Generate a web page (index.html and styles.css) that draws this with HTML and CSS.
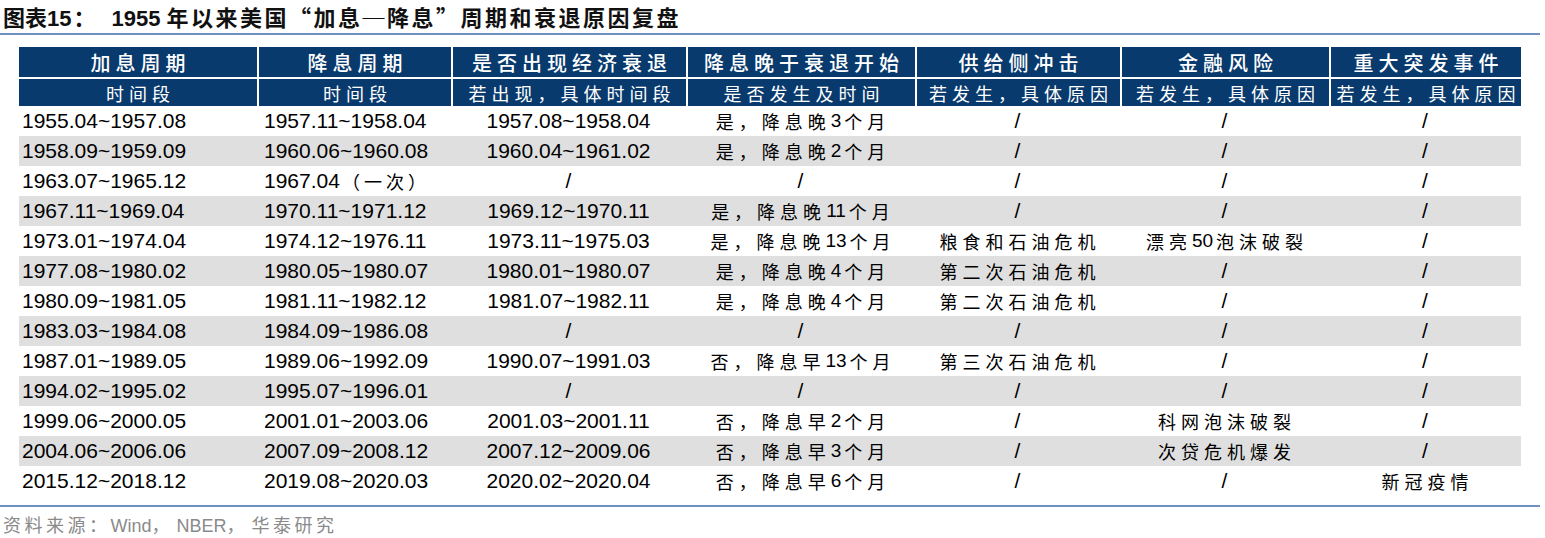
FILE: index.html
```html
<!DOCTYPE html>
<html lang="zh-CN">
<head>
<meta charset="utf-8">
<title>图表15</title>
<link rel="stylesheet" href="styles.css">
</head>
<body>
<div class="page">
  <h1 class="title"><span class="cj tight">图表</span>15<span class="cj colon">：</span>1955 <span class="cj">年以来美国“加息─降息”周期和衰退原因复盘</span></h1>
  <div class="rule"></div>
  <div class="table">
    <div class="row head1">
      <div class="th">加息周期</div>
      <div class="th">降息周期</div>
      <div class="th">是否出现经济衰退</div>
      <div class="th">降息晚于衰退开始</div>
      <div class="th">供给侧冲击</div>
      <div class="th">金融风险</div>
      <div class="th">重大突发事件</div>
    </div>
    <div class="row head2">
      <div class="th">时间段</div>
      <div class="th">时间段</div>
      <div class="th">若出现，具体时间段</div>
      <div class="th">是否发生及时间</div>
      <div class="th">若发生，具体原因</div>
      <div class="th">若发生，具体原因</div>
      <div class="th">若发生，具体原因</div>
    </div>

    <div class="row body">
      <div class="td left">1955.04~1957.08</div>
      <div class="td left2">1957.11~1958.04</div>
      <div class="td">1957.08~1958.04</div>
      <div class="td zh">是，降息晚<span class="n">3</span>个月</div>
      <div class="td">/</div>
      <div class="td">/</div>
      <div class="td">/</div>
    </div>
    <div class="row body alt">
      <div class="td left">1958.09~1959.09</div>
      <div class="td left2">1960.06~1960.08</div>
      <div class="td">1960.04~1961.02</div>
      <div class="td zh">是，降息晚<span class="n">2</span>个月</div>
      <div class="td">/</div>
      <div class="td">/</div>
      <div class="td">/</div>
    </div>
    <div class="row body">
      <div class="td left">1963.07~1965.12</div>
      <div class="td left2">1967.04<span class="zhs">（一次）</span></div>
      <div class="td">/</div>
      <div class="td">/</div>
      <div class="td">/</div>
      <div class="td">/</div>
      <div class="td">/</div>
    </div>
    <div class="row body alt">
      <div class="td left">1967.11~1969.04</div>
      <div class="td left2">1970.11~1971.12</div>
      <div class="td">1969.12~1970.11</div>
      <div class="td zh">是，降息晚<span class="n">11</span>个月</div>
      <div class="td">/</div>
      <div class="td">/</div>
      <div class="td">/</div>
    </div>
    <div class="row body">
      <div class="td left">1973.01~1974.04</div>
      <div class="td left2">1974.12~1976.11</div>
      <div class="td">1973.11~1975.03</div>
      <div class="td zh">是，降息晚<span class="n">13</span>个月</div>
      <div class="td zh">粮食和石油危机</div>
      <div class="td zh">漂亮<span class="n">50</span>泡沫破裂</div>
      <div class="td">/</div>
    </div>
    <div class="row body alt">
      <div class="td left">1977.08~1980.02</div>
      <div class="td left2">1980.05~1980.07</div>
      <div class="td">1980.01~1980.07</div>
      <div class="td zh">是，降息晚<span class="n">4</span>个月</div>
      <div class="td zh">第二次石油危机</div>
      <div class="td">/</div>
      <div class="td">/</div>
    </div>
    <div class="row body">
      <div class="td left">1980.09~1981.05</div>
      <div class="td left2">1981.11~1982.12</div>
      <div class="td">1981.07~1982.11</div>
      <div class="td zh">是，降息晚<span class="n">4</span>个月</div>
      <div class="td zh">第二次石油危机</div>
      <div class="td">/</div>
      <div class="td">/</div>
    </div>
    <div class="row body alt">
      <div class="td left">1983.03~1984.08</div>
      <div class="td left2">1984.09~1986.08</div>
      <div class="td">/</div>
      <div class="td">/</div>
      <div class="td">/</div>
      <div class="td">/</div>
      <div class="td">/</div>
    </div>
    <div class="row body">
      <div class="td left">1987.01~1989.05</div>
      <div class="td left2">1989.06~1992.09</div>
      <div class="td">1990.07~1991.03</div>
      <div class="td zh">否，降息早<span class="n">13</span>个月</div>
      <div class="td zh">第三次石油危机</div>
      <div class="td">/</div>
      <div class="td">/</div>
    </div>
    <div class="row body alt">
      <div class="td left">1994.02~1995.02</div>
      <div class="td left2">1995.07~1996.01</div>
      <div class="td">/</div>
      <div class="td">/</div>
      <div class="td">/</div>
      <div class="td">/</div>
      <div class="td">/</div>
    </div>
    <div class="row body">
      <div class="td left">1999.06~2000.05</div>
      <div class="td left2">2001.01~2003.06</div>
      <div class="td">2001.03~2001.11</div>
      <div class="td zh">否，降息早<span class="n">2</span>个月</div>
      <div class="td">/</div>
      <div class="td zh">科网泡沫破裂</div>
      <div class="td">/</div>
    </div>
    <div class="row body alt">
      <div class="td left">2004.06~2006.06</div>
      <div class="td left2">2007.09~2008.12</div>
      <div class="td">2007.12~2009.06</div>
      <div class="td zh">否，降息早<span class="n">3</span>个月</div>
      <div class="td">/</div>
      <div class="td zh">次贷危机爆发</div>
      <div class="td">/</div>
    </div>
    <div class="row body">
      <div class="td left">2015.12~2018.12</div>
      <div class="td left2">2019.08~2020.03</div>
      <div class="td">2020.02~2020.04</div>
      <div class="td zh">否，降息早<span class="n">6</span>个月</div>
      <div class="td">/</div>
      <div class="td">/</div>
      <div class="td zh">新冠疫情</div>
    </div>
  </div>
  <div class="rule bottom"></div>
  <p class="source"><span class="cj">资料来源：</span>Wind<span class="cj comma">，</span>NBER<span class="cj comma">，</span><span class="cj">华泰研究</span></p>
</div>
</body>
</html>
```

FILE: styles.css
```css
* { box-sizing: border-box; }
html, body { margin: 0; padding: 0; background: #fff; }
body { font-family: "Liberation Sans", "Noto Sans CJK SC", sans-serif; color: #000; }

.page { width: 1545px; height: 538px; overflow: hidden; }

.title {
  margin: 0;
  height: 33px;
  padding: 4px 0 0 3px;
  font-size: 22px;
  line-height: 25px;
  font-weight: 700;
  color: #111;
  white-space: nowrap;
}
.title .cj {
  font-family: "Noto Sans CJK SC", sans-serif;
  letter-spacing: 2.5px;
}
.title .cj.tight { letter-spacing: 0; }
.title .cj.colon { letter-spacing: 0; margin: 0 16px 0 2px; }

.rule {
  width: 1540px;
  height: 2px;
  background: #7090c2;
}
.rule.bottom { margin-top: 9px; }

.table {
  margin: 12px 0 0 19px;
  width: 1502px;
}
.row {
  display: grid;
  grid-template-columns: 238px 194px 235px 229px 205px 209px 192px;
}
.th {
  background: #083a6d;
  color: #fff;
  font-family: "Noto Sans CJK SC", sans-serif;
  text-align: center;
  white-space: nowrap;
  display: flex;
  align-items: center;
  justify-content: center;
}
.th + .th { border-left: 2px solid #fff; }
.head1 .th {
  height: 30px;
  font-size: 20px;
  font-weight: 500;
  letter-spacing: 5px;
  padding-left: 5px;
}
.head2 .th {
  height: 29px;
  border-top: 2px solid #fff;
  font-size: 18px;
  letter-spacing: 5px;
  padding-left: 5px;
}

.body { height: 30px; }
.body.alt { background: #dfdfdf; }
.td {
  display: flex;
  align-items: center;
  justify-content: center;
  font-size: 21px;
  white-space: nowrap;
}
.td.left { justify-content: flex-start; padding-left: 3px; }
.td.left2 { justify-content: flex-start; padding-left: 7px; }
.td.zh {
  font-size: 18px;
  letter-spacing: 5px;
  padding-left: 5px;
}
.td.zh .n {
  font-size: 19px;
  letter-spacing: 0;
  margin-right: 3px;
}
.zhs {
  font-family: "Noto Sans CJK SC", sans-serif;
  font-size: 18px;
  letter-spacing: 4px;
  margin-left: 2px;
}

.source {
  margin: 5px 0 0 3px;
  font-size: 18px;
  line-height: 24px;
  color: #8a8a8a;
  white-space: nowrap;
}
.source .cj {
  font-family: "Noto Sans CJK SC", sans-serif;
  letter-spacing: 3.5px;
}
.source .cj.comma { letter-spacing: 7px; }
```
